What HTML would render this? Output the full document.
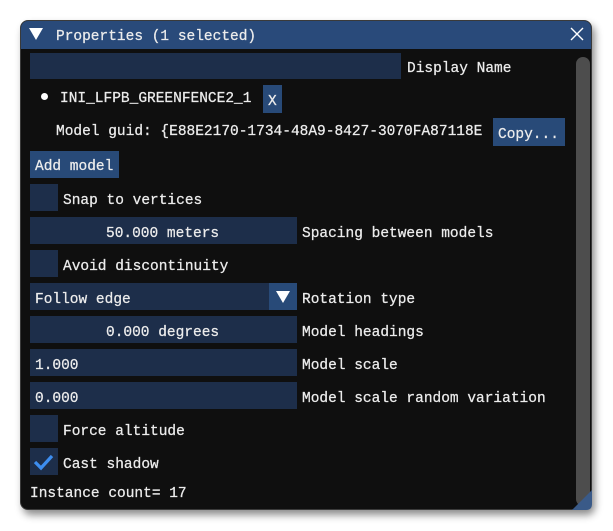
<!DOCTYPE html>
<html><head><style>
body{margin:0;width:613px;height:531px;background:#fff;position:relative;overflow:hidden;font-family:"Liberation Mono","DejaVu Sans Mono",monospace;font-size:14.5px;color:#ececec}
.win{position:absolute;left:20px;top:20px;width:572px;height:490px;background:#0f0f0f;border-radius:8px;box-shadow:3px 5px 8px rgba(0,0,0,.45);overflow:hidden;border:1px solid #3a3a3a;box-sizing:border-box}
.title{position:absolute;left:0;top:0;right:0;height:28px;background:#294a7a}
.a{position:absolute;white-space:pre;line-height:22px;-webkit-text-stroke:0.25px #ececec}
.f{position:absolute;background:#1d2e4a}
.b{position:absolute;background:#284a78}
</style></head><body>
<div class="win">
<div class="title"></div>
</div>
<svg style="position:absolute;left:29px;top:28px" width="14" height="12"><polygon points="0,0 14,0 7,12" fill="#fff"/></svg>
<div class="a" style="left:56px;top:26px">Properties (1 selected)</div>
<svg style="position:absolute;left:570px;top:27px" width="14" height="14"><path d="M1 1L13 13M13 1L1 13" stroke="#fff" stroke-width="1.4"/></svg>
<div style="position:absolute;left:576px;top:57px;width:14px;height:449px;background:#4d4d4d;border-radius:7px"></div>
<svg style="position:absolute;left:572px;top:490px" width="20" height="20"><path d="M20 0V14Q20 20 14 20H0Z" fill="#3a5a88"/></svg>

<div class="f" style="left:30px;top:53px;width:371px;height:26px"></div>
<div class="a" style="left:407px;top:58px">Display Name</div>
<div style="position:absolute;left:41px;top:93px;width:7px;height:7px;border-radius:50%;background:#fff"></div>
<div class="a" style="left:60px;top:88px">INI_LFPB_GREENFENCE2_1</div>
<div class="b" style="left:263px;top:85px;width:19px;height:28px"></div>
<div class="a" style="left:268px;top:91px">X</div>
<div class="a" style="left:56px;top:121px">Model guid: {E88E2170-1734-48A9-8427-3070FA87118E</div>
<div class="b" style="left:493px;top:118px;width:72px;height:28px"></div>
<div class="a" style="left:498px;top:124px">Copy...</div>
<div class="b" style="left:30px;top:151px;width:89px;height:27px"></div>
<div class="a" style="left:35px;top:156px">Add model</div>
<div class="f" style="left:30px;top:184px;width:28px;height:27px"></div>
<div class="a" style="left:63px;top:190px">Snap to vertices</div>
<div class="f" style="left:30px;top:217px;width:267px;height:27px"></div>
<div class="a" style="left:106px;top:223px">50.000 meters</div>
<div class="a" style="left:302px;top:223px">Spacing between models</div>
<div class="f" style="left:30px;top:250px;width:28px;height:27px"></div>
<div class="a" style="left:63px;top:256px">Avoid discontinuity</div>
<div class="f" style="left:30px;top:283px;width:267px;height:27px"></div>
<div class="b" style="left:269px;top:283px;width:28px;height:27px"></div>
<svg style="position:absolute;left:276px;top:291px" width="14" height="12"><polygon points="0,0 14,0 7,12" fill="#fff"/></svg>
<div class="a" style="left:35px;top:289px">Follow edge</div>
<div class="a" style="left:302px;top:289px">Rotation type</div>
<div class="f" style="left:30px;top:316px;width:267px;height:27px"></div>
<div class="a" style="left:106px;top:322px">0.000 degrees</div>
<div class="a" style="left:302px;top:322px">Model headings</div>
<div class="f" style="left:30px;top:349px;width:267px;height:27px"></div>
<div class="a" style="left:35px;top:355px">1.000</div>
<div class="a" style="left:302px;top:355px">Model scale</div>
<div class="f" style="left:30px;top:382px;width:267px;height:27px"></div>
<div class="a" style="left:35px;top:388px">0.000</div>
<div class="a" style="left:302px;top:388px">Model scale random variation</div>
<div class="f" style="left:30px;top:415px;width:28px;height:27px"></div>
<div class="a" style="left:63px;top:421px">Force altitude</div>
<div class="f" style="left:30px;top:448px;width:28px;height:27px"></div>
<svg style="position:absolute;left:33px;top:452px" width="22" height="20"><path d="M2 10L8 16L19 4" stroke="#3d8ef0" stroke-width="3.2" fill="none"/></svg>
<div class="a" style="left:63px;top:454px">Cast shadow</div>
<div class="a" style="left:30px;top:483px">Instance count= 17</div>
</body></html>
